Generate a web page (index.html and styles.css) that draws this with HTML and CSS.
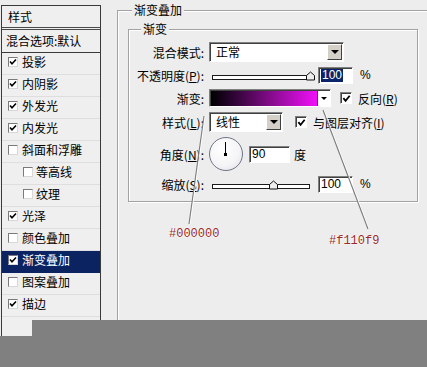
FILE: index.html
```html
<!DOCTYPE html>
<html lang="zh-CN">
<head>
<meta charset="utf-8">
<title>图层样式 - 渐变叠加</title>
<link rel="stylesheet" href="styles.css">
</head>
<body>
<div class="page">
  <aside class="styles-panel">
    <div class="panel-head">样式</div>
    <div class="panel-blend">混合选项:默认</div>
    <ul class="style-list">
      <li class="style-item"><span class="cb"><svg viewBox="0 0 8 8"><path d="M1 3.5 L3 5.8 L7 1.5" /></svg></span>投影</li>
      <li class="style-item"><span class="cb"><svg viewBox="0 0 8 8"><path d="M1 3.5 L3 5.8 L7 1.5" /></svg></span>内阴影</li>
      <li class="style-item"><span class="cb"><svg viewBox="0 0 8 8"><path d="M1 3.5 L3 5.8 L7 1.5" /></svg></span>外发光</li>
      <li class="style-item"><span class="cb"><svg viewBox="0 0 8 8"><path d="M1 3.5 L3 5.8 L7 1.5" /></svg></span>内发光</li>
      <li class="style-item"><span class="cb"></span>斜面和浮雕</li>
      <li class="style-item sub"><span class="cb"></span>等高线</li>
      <li class="style-item sub"><span class="cb"></span>纹理</li>
      <li class="style-item"><span class="cb"><svg viewBox="0 0 8 8"><path d="M1 3.5 L3 5.8 L7 1.5" /></svg></span>光泽</li>
      <li class="style-item"><span class="cb"></span>颜色叠加</li>
      <li class="style-item selected"><span class="cb"><svg viewBox="0 0 8 8"><path d="M1 3.5 L3 5.8 L7 1.5" /></svg></span>渐变叠加</li>
      <li class="style-item"><span class="cb"></span>图案叠加</li>
      <li class="style-item"><span class="cb"><svg viewBox="0 0 8 8"><path d="M1 3.5 L3 5.8 L7 1.5" /></svg></span>描边</li>
    </ul>
  </aside>

  <main class="main">
    <section class="group outer">
      <span class="group-title outer-title">渐变叠加</span>
      <section class="group inner">
        <span class="group-title inner-title">渐变</span>
        <div class="form">
          <div class="row r1">
            <label class="lbl">混合模式:</label>
            <div class="select blend-select"><span class="select-text">正常</span><span class="select-btn"><i class="tri"></i></span></div>
          </div>
          <div class="row r2">
            <label class="lbl">不透明度(<u>P</u>):</label>
            <div class="slider"><span class="track"></span><svg class="thumb thumb-max" viewBox="0 0 9 9"><path d="M0.5 8.5 V4 L4.5 0.5 L8.5 4 V8.5 Z"/></svg></div>
            <div class="num"><span class="sel">100</span></div>
            <span class="unit">%</span>
          </div>
          <div class="row r3">
            <label class="lbl">渐变:</label>
            <div class="swatch"><span class="grad"></span><span class="swatch-btn"><i class="tri small"></i></span></div>
            <span class="chk"><svg viewBox="0 0 10 10"><path d="M1.5 4.5 L4 7.5 L8.5 2" /></svg></span>
            <span class="chk-text">反向(<u>R</u>)</span>
          </div>
          <div class="row r4">
            <label class="lbl">样式(<u>L</u>):</label>
            <div class="select style-select"><span class="select-text">线性</span><span class="select-btn"><i class="tri"></i></span></div>
            <span class="chk align-chk"><svg viewBox="0 0 10 10"><path d="M1.5 4.5 L4 7.5 L8.5 2" /></svg></span>
            <span class="chk-text">与图层对齐(<u>I</u>)</span>
          </div>
          <div class="row r5">
            <label class="lbl">角度(<u>N</u>):</label>
            <div class="dial"><span class="dial-hand"></span><span class="dial-dot"></span></div>
            <div class="num angle"><span>90</span></div>
            <span class="deg">度</span>
          </div>
          <div class="row r6">
            <label class="lbl">缩放(<u>S</u>):</label>
            <div class="slider"><span class="track"></span><svg class="thumb thumb-mid" viewBox="0 0 9 9"><path d="M0.5 8.5 V4 L4.5 0.5 L8.5 4 V8.5 Z"/></svg></div>
            <div class="num"><span>100</span></div>
            <span class="unit">%</span>
          </div>
        </div>
      </section>
    </section>
  </main>
</div>

<svg class="annot-lines" viewBox="0 0 427 367" width="427" height="367">
  <line x1="205" y1="116" x2="190" y2="224" class="ln-light"/>
  <line x1="204" y1="116" x2="189" y2="224" class="ln"/>
  <line x1="324" y1="110" x2="369" y2="229" class="ln-light"/>
  <line x1="323" y1="110" x2="368" y2="229" class="ln"/>
</svg>
<span class="note note-black">#000000</span>
<span class="note note-pink">#f110f9</span>

<div class="shade shade-a"></div>
<div class="shade shade-b"></div>
</body>
</html>
```

FILE: styles.css
```css
* { box-sizing: border-box; }

html, body {
  margin: 0;
  padding: 0;
}

body {
  width: 427px;
  height: 367px;
  position: relative;
  overflow: hidden;
  background: #ededed;
  color: #000;
  font-family: "Noto Sans CJK SC", "Noto Sans", sans-serif;
  font-size: 12px;
}

u { text-decoration: underline; text-underline-offset: 1px; }

.page {
  display: flex;
  align-items: flex-start;
  height: 367px;
}

/* ---------- left styles panel ---------- */
.styles-panel {
  margin: 5px 0 0 1px;
  width: 100px;
  height: 345px;
  border: 1px solid #3a3a3a;
  background: #efefef;
  flex: none;
}

.panel-head {
  height: 24px;
  line-height: 22px;
  padding-left: 6px;
  border-bottom: 3px double #4a4a4a;
}

.panel-blend {
  height: 23px;
  line-height: 21px;
  padding-left: 4px;
  border-bottom: 1px solid #3a3a3a;
  white-space: nowrap;
}

.style-list {
  list-style: none;
  margin: 0;
  padding: 0;
}

.style-item {
  display: flex;
  align-items: center;
  gap: 4px;
  height: 22px;
  padding: 0 0 4px 6px;
  line-height: 17px;
  border-bottom: 1px solid #dedede;
  white-space: nowrap;
}

.style-item.sub { padding-left: 21px; gap: 3px; }

.style-item.selected {
  background: #0b2461;
  color: #fff;
  border-bottom-color: #0b2461;
}

.cb {
  width: 10px;
  height: 10px;
  flex: none;
  border: 1px solid;
  border-color: #7a7a7a #d8d8d8 #d8d8d8 #7a7a7a;
  background: #fff;
  display: flex;
  align-items: center;
  justify-content: center;
}

.cb svg {
  width: 8px;
  height: 8px;
  fill: none;
  stroke: #000;
  stroke-width: 1.6;
}

/* ---------- right side groups ---------- */
.main {
  flex: 1;
  margin: 10px 0 0 16px;
}

.group {
  position: relative;
  border: 1px solid #a2a2a2;
}

.group.outer {
  border-right: none;
  border-bottom: none;
  box-shadow: inset 1px 1px 0 #fff;
  height: 360px;
  margin-right: -6px;
  padding: 18px 0 0 10px;
}

.group.inner {
  width: 290px;
  height: 173px;
  box-shadow: inset 1px 1px 0 #fff, 1px 1px 0 #fff;
  padding-top: 12px;
}

.group-title {
  position: absolute;
  top: -9px;
  padding: 0 2px;
  line-height: 16px;
  background: #ededed;
  white-space: nowrap;
}

.outer-title { left: 14px; }
.inner-title { left: 12px; }

/* ---------- form rows ---------- */
.row {
  display: flex;
  align-items: center;
  white-space: nowrap;
}

.lbl {
  width: 75px;
  margin-right: 5px;
  text-align: right;
  flex: none;
}

.r1 { height: 20px; }
.r2 { height: 22px; margin-top: 2px; }
.r3 { height: 20px; margin-top: 2px; }
.r4 { height: 22px; margin-top: 3px; }
.r5 { height: 36px; margin-top: 3px; }
.r6 { height: 20px; margin-top: 2px; }

/* select */
.select {
  display: flex;
  height: 20px;
  border: 1px solid;
  border-color: #808080 #fff #fff #808080;
  box-shadow: inset 1px 1px 0 #404040;
  background: #fff;
}

.blend-select { width: 135px; }
.style-select { width: 74px; }

.select-text {
  flex: 1;
  padding-left: 6px;
  line-height: 18px;
}

.select-btn {
  width: 15px;
  margin: 1px 1px 1px 0;
  background: #d4d0c8;
  border: 1px solid;
  border-color: #fff #404040 #404040 #fff;
  display: flex;
  align-items: center;
  justify-content: center;
}

.tri {
  width: 0;
  height: 0;
  border-left: 4px solid transparent;
  border-right: 4px solid transparent;
  border-top: 4px solid #000;
}

.tri.small {
  border-left-width: 3px;
  border-right-width: 3px;
  border-top-width: 3px;
}

/* slider */
.slider {
  position: relative;
  width: 98px;
  height: 11px;
  margin-left: 3px;
}

.track {
  position: absolute;
  left: 0;
  right: 0;
  bottom: 1px;
  height: 5px;
  border: 1px solid #1a1a1a;
  background: #fff;
}

.thumb {
  position: absolute;
  bottom: 0;
  width: 9px;
  height: 10px;
  fill: #eeeeee;
  stroke: #111;
  stroke-width: 1;
}

.thumb-max { left: 94px; }
.thumb-mid { left: 57px; }

/* numeric field */
.num {
  width: 35px;
  height: 17px;
  margin-left: 8px;
  border: 1px solid;
  border-color: #808080 #fff #fff #808080;
  box-shadow: inset 1px 1px 0 #404040;
  background: #fff;
  padding: 0 0 0 2px;
  font-family: "Liberation Sans", Arial, sans-serif;
  font-size: 12px;
  line-height: 15px;
  display: flex;
  align-items: center;
}

.num .sel {
  background: #0a246a;
  color: #fff;
  padding: 0 1px;
  line-height: 13px;
}

.num.angle {
  width: 41px;
  margin-left: 6px;
}

.unit {
  margin-left: 7px;
  font-family: "Liberation Sans", Arial, sans-serif;
  font-size: 12px;
}

.deg { margin-left: 4px; }

/* gradient swatch */
.swatch {
  display: flex;
  width: 122px;
  height: 18px;
  border: 1px solid;
  border-color: #808080 #fff #fff #808080;
  box-shadow: inset 1px 1px 0 #404040;
  background: #fff;
  padding: 1px 0 0 1px;
}

.grad {
  flex: 1;
  background: linear-gradient(to right, #000000 0%, #2a0430 20%, #8d0c94 60%, #f110f9 100%);
}

.swatch-btn {
  width: 13px;
  display: flex;
  align-items: center;
  justify-content: center;
  border-left: 1px solid #404040;
}

/* checkbox */
.chk {
  width: 12px;
  height: 12px;
  flex: none;
  margin-left: 9px;
  border: 1px solid;
  border-color: #808080 #fff #fff #808080;
  box-shadow: inset 1px 1px 0 #404040;
  background: #fff;
  display: flex;
  align-items: center;
  justify-content: center;
}

.chk svg {
  width: 9px;
  height: 9px;
  fill: none;
  stroke: #000;
  stroke-width: 2;
}

.align-chk { margin-left: 12px; }

.chk-text { margin-left: 6px; }

/* angle dial */
.dial {
  position: relative;
  width: 34px;
  height: 34px;
  flex: none;
  border-radius: 50%;
  border: 1px solid #6d7486;
  background: radial-gradient(circle at 40% 35%, #ffffff 0%, #f4f4f6 60%, #dcdde4 100%);
}

.dial-hand {
  position: absolute;
  left: 15px;
  top: 4px;
  width: 1px;
  height: 12px;
  background: #000;
}

.dial-dot {
  position: absolute;
  left: 14px;
  top: 15px;
  width: 3px;
  height: 3px;
  background: #000;
}

/* ---------- annotations ---------- */
.annot-lines {
  position: absolute;
  left: 0;
  top: 0;
  pointer-events: none;
}

.ln { stroke: #7c7c7c; stroke-width: 1.1; }
.ln-light { stroke: #ffffff; stroke-width: 1; }

.note {
  position: absolute;
  font-family: "Liberation Mono", "DejaVu Sans Mono", monospace;
  font-size: 12px;
  line-height: 13px;
  color: #9b2a25;
  text-shadow: 0 0 2px #fff, 0 0 1px #fff;
}

.note-black { left: 169px; top: 228px; }
.note-pink { left: 329px; top: 235px; }

/* ---------- bottom grey cover ---------- */
.shade {
  position: absolute;
  right: 0;
  bottom: 0;
  background: #808080;
}

.shade-a { left: 32px; top: 320px; }
.shade-b { left: 0; top: 336px; }
```
